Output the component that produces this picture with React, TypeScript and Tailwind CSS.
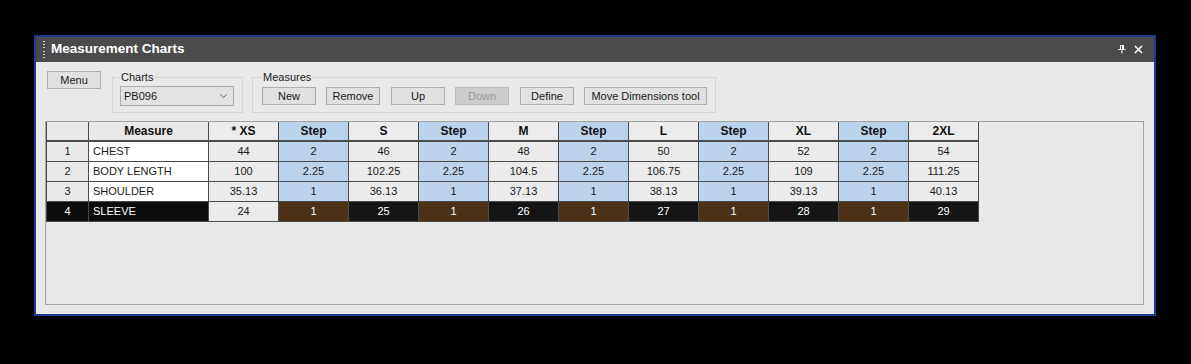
import React from "react";

const SIZES = ["* XS", "S", "M", "L", "XL", "2XL"];

const ROWS: { name: string; values: string[]; steps: string[] }[] = [
  { name: "CHEST", values: ["44", "46", "48", "50", "52", "54"], steps: ["2", "2", "2", "2", "2"] },
  {
    name: "BODY LENGTH",
    values: ["100", "102.25", "104.5", "106.75", "109", "111.25"],
    steps: ["2.25", "2.25", "2.25", "2.25", "2.25"],
  },
  {
    name: "SHOULDER",
    values: ["35.13", "36.13", "37.13", "38.13", "39.13", "40.13"],
    steps: ["1", "1", "1", "1", "1"],
  },
  { name: "SLEEVE", values: ["24", "25", "26", "27", "28", "29"], steps: ["1", "1", "1", "1", "1"] },
];

const SELECTED = 3;

function Button({ label, disabled, className = "w-[54px]" }: { label: string; disabled?: boolean; className?: string }) {
  return (
    <button
      type="button"
      disabled={disabled}
      className={
        "block h-[18px] shrink-0 border text-[11px] leading-none " +
        className +
        (disabled
          ? " border-[#bdbdbd] bg-[#cccccc] text-[#9a9a9a]"
          : " border-[#adadad] bg-[#e1e1e1] text-[#1a1a1a]")
      }
    >
      {label}
    </button>
  );
}

function Cell({ children, className }: { children?: React.ReactNode; className: string }) {
  return (
    <div className={"flex items-center border-b border-r border-[#4a4a4a] " + className}>
      {children}
    </div>
  );
}

export default function App() {
  return (
    <div
      className="h-[364px] w-[1191px] bg-black pl-[34px] pt-[35px]"
      style={{ fontFamily: '"Liberation Sans", Arial, sans-serif' }}
    >
      <div className="flex h-[281px] w-[1122px] flex-col border-2 border-[#1c3b8f]">
        {/* title bar */}
        <div className="flex h-[25px] shrink-0 items-center bg-[#4b4b4b] pl-[7px] pr-[11px]">
          <div className="flex h-[18px] w-[2px] flex-col justify-between">
            {Array.from({ length: 6 }).map((_, i) => (
              <span key={i} className="h-[1px] w-[2px] bg-[#d8d8d8]" />
            ))}
          </div>
          <span className="ml-[6px] text-[13.5px] font-bold text-white">Measurement Charts</span>
          <div className="ml-auto flex items-center gap-[8px]">
            <svg width="8" height="9" viewBox="0 0 8 9">
              <path d="M2 0.5h4M2.5 0.5v4M5.5 0.5v4M0.5 4.5h7M4 4.5v4" stroke="white" strokeWidth="1" fill="none" />
              <rect x="4" y="1" width="1.5" height="3.5" fill="white" />
            </svg>
            <svg width="9" height="9" viewBox="0 0 9 9">
              <path d="M1 1L8 8M8 1L1 8" stroke="white" strokeWidth="1.6" />
            </svg>
          </div>
        </div>

        {/* content */}
        <div className="flex-1 bg-[#e9e9e9] pl-[9px] pt-[8px]">
          <div className="flex h-[43px] items-start">
            <Button label="Menu" className="ml-[2px] mt-[1px] w-[54px]" />

            <fieldset className="ml-[11px] h-[43px] w-[131px] border border-[#d6d6d6] px-[7px]">
              <legend className="px-[1px] text-[11px] leading-[14px] text-[#1a1a1a]">Charts</legend>
              <div className="mt-[2px] flex h-[20px] w-[114px] items-center justify-between border border-[#acacac] bg-[#e3e3e3] pl-[3px] pr-[6px] text-[11px] text-[#1a1a1a]">
                <span>PB096</span>
                <svg width="7" height="4" viewBox="0 0 7 4">
                  <path d="M0.5 0.5L3.5 3.5L6.5 0.5" stroke="#606060" strokeWidth="1" fill="none" />
                </svg>
              </div>
            </fieldset>

            <fieldset className="ml-[9px] h-[43px] w-[464px] border border-[#d6d6d6] pl-[9px]">
              <legend className="px-[1px] text-[11px] leading-[14px] text-[#1a1a1a]">Measures</legend>
              <div className="mt-[3px] flex">
                <Button label="New" />
                <Button label="Remove" className="ml-[10px] w-[54px]" />
                <Button label="Up" className="ml-[11px] w-[54px]" />
                <Button label="Down" disabled className="ml-[10px] w-[54px]" />
                <Button label="Define" className="ml-[11px] w-[54px]" />
                <Button label="Move Dimensions tool" className="ml-[10px] w-[123px]" />
              </div>
            </fieldset>
          </div>

          {/* grid panel */}
          <div className="mt-[8px] h-[184px] w-[1099px] border border-[#a3a3a3]">
            <div className="grid w-fit grid-cols-[42px_120px_repeat(11,70px)] border-l border-[#4a4a4a]">
              {/* header */}
              <Cell className="h-[20px] justify-center border-b-2 bg-[#e9e9e9]" />
              <Cell className="h-[20px] justify-center border-b-2 bg-[#e9e9e9] text-[12px] font-bold text-[#111]">
                Measure
              </Cell>
              {SIZES.map((s, i) => (
                <React.Fragment key={s}>
                  <Cell className="h-[20px] justify-center border-b-2 bg-[#ececec] text-[12px] font-bold text-[#111]">
                    {s}
                  </Cell>
                  {i < SIZES.length - 1 && (
                    <Cell className="h-[20px] justify-center border-b-2 bg-[#bcd3ee] text-[12px] font-bold text-[#111]">
                      Step
                    </Cell>
                  )}
                </React.Fragment>
              ))}

              {/* rows */}
              {ROWS.map((row, r) => {
                const sel = r === SELECTED;
                return (
                  <React.Fragment key={row.name}>
                    <Cell
                      className={
                        "h-[20px] justify-center text-[11px] " +
                        (sel ? "bg-[#0c0c0c] text-white" : "bg-[#e9e9e9] text-[#1a1a1a]")
                      }
                    >
                      {r + 1}
                    </Cell>
                    <Cell
                      className={
                        "h-[20px] pl-[4px] text-[11px] " + (sel ? "bg-[#0c0c0c] text-white" : "bg-white text-[#1a1a1a]")
                      }
                    >
                      {row.name}
                    </Cell>
                    {row.values.map((v, i) => (
                      <React.Fragment key={i}>
                        <Cell
                          className={
                            "h-[20px] justify-center text-[11px] " +
                            (sel && i > 0 ? "bg-[#151515] text-white" : "bg-[#ebebeb] text-[#1a1a1a]")
                          }
                        >
                          {v}
                        </Cell>
                        {i < row.steps.length && (
                          <Cell
                            className={
                              "h-[20px] justify-center text-[11px] " +
                              (sel ? "bg-[#4a3117] text-white" : "bg-[#bcd3ee] text-[#1a1a1a]")
                            }
                          >
                            {row.steps[i]}
                          </Cell>
                        )}
                      </React.Fragment>
                    ))}
                  </React.Fragment>
                );
              })}
            </div>
          </div>
        </div>
      </div>
    </div>
  );
}
